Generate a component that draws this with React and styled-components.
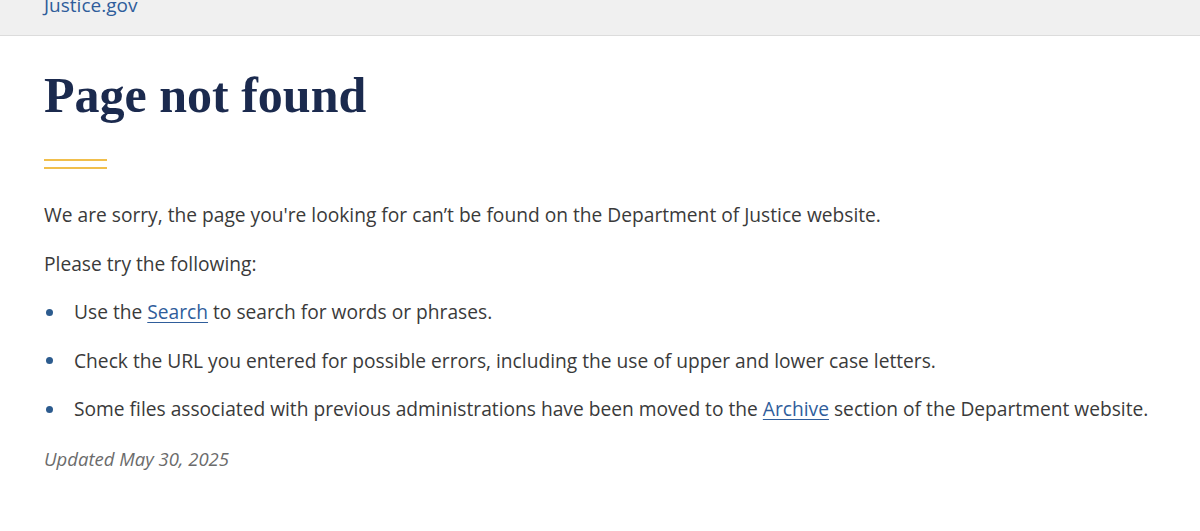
import React from 'react'
import styled, { createGlobalStyle } from 'styled-components'

const Global = createGlobalStyle`
  html, body {
    margin: 0;
    padding: 0;
    background: #fff;
  }
  body {
    font-family: "Open Sans", "Liberation Sans", sans-serif;
  }
`

const Header = styled.header`
  height: 35px;
  background: #f0f0f0;
  border-bottom: 1px solid #dcdcdc;
  padding: 0 44px;
  overflow: hidden;
`

const SiteName = styled.a`
  display: block;
  margin-top: -8px;
  font-size: 19px;
  line-height: 26px;
  color: #2f5d9b;
  text-decoration: none;
`

const Main = styled.main`
  padding: 0 44px;
`

const Title = styled.h1`
  margin: 31px 0 0;
  font-family: "Liberation Serif", "DejaVu Serif", serif;
  font-weight: 700;
  font-size: 50px;
  line-height: 56px;
  color: #1b2a4e;
`

const Rule = styled.div`
  width: 63px;
  height: 10px;
  margin-top: 36px;
  border-top: 2px solid #f1bf4c;
  border-bottom: 2px solid #f1bf4c;
  box-sizing: border-box;
`

const Text = styled.p`
  margin: 0;
  font-size: 19.2px;
  line-height: 48.5px;
  color: #3a3a3a;
`

const Intro = styled(Text)`
  margin-top: 22px;
`

const List = styled.ul`
  margin: 0;
  padding: 0;
  list-style: none;
`

const Item = styled.li`
  display: flex;
  align-items: center;
  gap: 21px;
  font-size: 19.2px;
  line-height: 48.5px;
  color: #3a3a3a;

  &::before {
    content: '';
    width: 7px;
    height: 7px;
    margin-left: 2px;
    border-radius: 50%;
    background: #2c5b8e;
    flex-shrink: 0;
  }
`

const Link = styled.a`
  color: #2f5d9b;
  text-decoration: underline;
  text-underline-offset: 3px;
`

const Updated = styled.p`
  margin: 1px 0 0;
  font-size: 18.5px;
  line-height: 48.5px;
  font-style: italic;
  color: #6b6b6b;
`

export default function App() {
  return (
    <>
      <Global />
      <Header>
        <SiteName href="#">Justice.gov</SiteName>
      </Header>
      <Main>
        <Title>Page not found</Title>
        <Rule />
        <Intro>We are sorry, the page you're looking for can’t be found on the Department of Justice website.</Intro>
        <Text>Please try the following:</Text>
        <List>
          <Item><span>Use the <Link href="#">Search</Link> to search for words or phrases.</span></Item>
          <Item><span>Check the URL you entered for possible errors, including the use of upper and lower case letters.</span></Item>
          <Item><span>Some files associated with previous administrations have been moved to the <Link href="#">Archive</Link> section of the Department website.</span></Item>
        </List>
        <Updated>Updated May 30, 2025</Updated>
      </Main>
    </>
  )
}
